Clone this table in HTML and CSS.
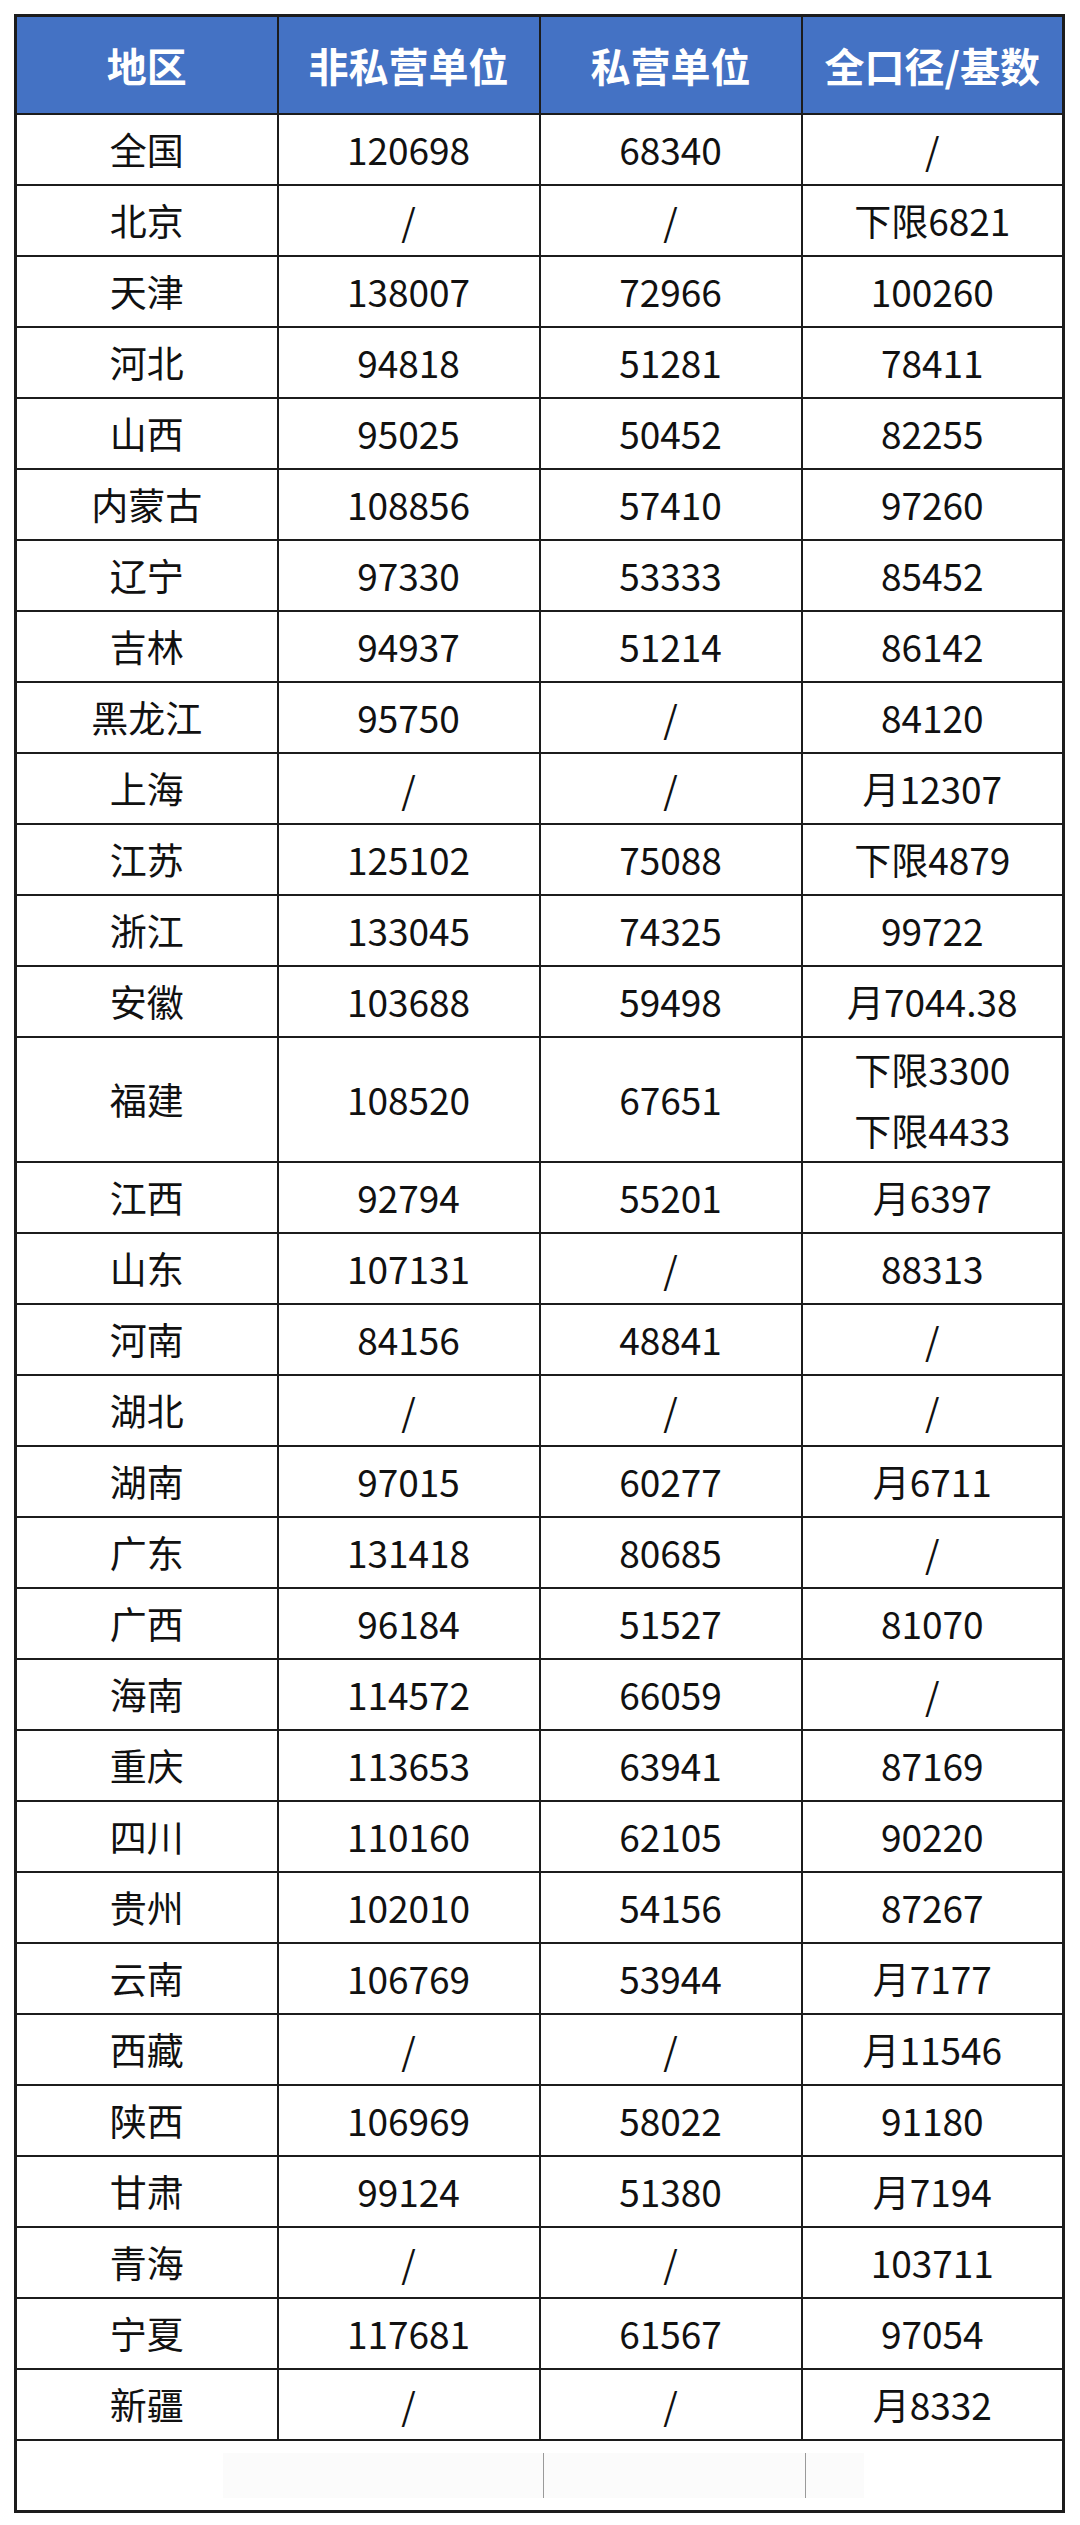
FILE: index.html
```html
<!DOCTYPE html>
<html lang="zh-CN">
<head>
<meta charset="utf-8">
<link rel="stylesheet" href="styles.css">
</head>
<body>
<table class="tbl">
<colgroup><col class="c"><col class="c"><col class="c"><col class="c"></colgroup>
<thead>
<tr class="head"><th>地区</th><th>非私营单位</th><th>私营单位</th><th>全口径/基数</th></tr>
</thead>
<tbody>
<tr><td>全国</td><td>120698</td><td>68340</td><td>/</td></tr>
<tr><td>北京</td><td>/</td><td>/</td><td>下限6821</td></tr>
<tr><td>天津</td><td>138007</td><td>72966</td><td>100260</td></tr>
<tr><td>河北</td><td>94818</td><td>51281</td><td>78411</td></tr>
<tr><td>山西</td><td>95025</td><td>50452</td><td>82255</td></tr>
<tr><td>内蒙古</td><td>108856</td><td>57410</td><td>97260</td></tr>
<tr><td>辽宁</td><td>97330</td><td>53333</td><td>85452</td></tr>
<tr><td>吉林</td><td>94937</td><td>51214</td><td>86142</td></tr>
<tr><td>黑龙江</td><td>95750</td><td>/</td><td>84120</td></tr>
<tr><td>上海</td><td>/</td><td>/</td><td>月12307</td></tr>
<tr><td>江苏</td><td>125102</td><td>75088</td><td>下限4879</td></tr>
<tr><td>浙江</td><td>133045</td><td>74325</td><td>99722</td></tr>
<tr><td>安徽</td><td>103688</td><td>59498</td><td>月7044.38</td></tr>
<tr class="tall"><td>福建</td><td>108520</td><td>67651</td><td>下限3300<br>下限4433</td></tr>
<tr><td>江西</td><td>92794</td><td>55201</td><td>月6397</td></tr>
<tr><td>山东</td><td>107131</td><td>/</td><td>88313</td></tr>
<tr><td>河南</td><td>84156</td><td>48841</td><td>/</td></tr>
<tr><td>湖北</td><td>/</td><td>/</td><td>/</td></tr>
<tr><td>湖南</td><td>97015</td><td>60277</td><td>月6711</td></tr>
<tr><td>广东</td><td>131418</td><td>80685</td><td>/</td></tr>
<tr><td>广西</td><td>96184</td><td>51527</td><td>81070</td></tr>
<tr><td>海南</td><td>114572</td><td>66059</td><td>/</td></tr>
<tr><td>重庆</td><td>113653</td><td>63941</td><td>87169</td></tr>
<tr><td>四川</td><td>110160</td><td>62105</td><td>90220</td></tr>
<tr><td>贵州</td><td>102010</td><td>54156</td><td>87267</td></tr>
<tr><td>云南</td><td>106769</td><td>53944</td><td>月7177</td></tr>
<tr><td>西藏</td><td>/</td><td>/</td><td>月11546</td></tr>
<tr><td>陕西</td><td>106969</td><td>58022</td><td>91180</td></tr>
<tr><td>甘肃</td><td>99124</td><td>51380</td><td>月7194</td></tr>
<tr><td>青海</td><td>/</td><td>/</td><td>103711</td></tr>
<tr><td>宁夏</td><td>117681</td><td>61567</td><td>97054</td></tr>
<tr><td>新疆</td><td>/</td><td>/</td><td>月8332</td></tr>
<tr class="empty"><td colspan="4"><div class="ghost"><span class="g1"></span><span class="g2"></span><span class="g3"></span></div></td></tr>
</tbody>
</table>
</body>
</html>
```

FILE: styles.css
```css
html, body {
  margin: 0;
  padding: 0;
  background: #ffffff;
}
body {
  padding: 14px 0 0 14px;
  font-family: "Noto Sans CJK SC", "Noto Sans", sans-serif;
}
.tbl {
  border-collapse: collapse;
  table-layout: fixed;
  width: 1051px;
  border: 3px solid #1c1c1c;
}
.c { width: 262px; }
.tbl th, .tbl td {
  border: 2px solid #1c1c1c;
  text-align: center;
  vertical-align: middle;
  padding: 0;
  color: #111111;
}
.head th {
  background: #4472c4;
  color: #ffffff;
  font-weight: 700;
  font-size: 40px;
  height: 96px;
  line-height: 50px;
}
.tbl td {
  font-size: 37px;
  font-weight: 400;
  height: 69px;
  line-height: 61px;
}
.tall td { height: 123px; }
.empty td { height: 69px; }
.ghost {
  display: flex;
  margin-left: 206px;
  width: 641px;
  height: 45px;
  background: #fbfbfb;
}
.ghost span { display: block; height: 100%; }
.g1 { width: 320px; border-right: 1px solid #9a9a9a; }
.g2 { width: 261px; border-right: 1px solid #9a9a9a; }
.g3 { flex: 1; }
```
